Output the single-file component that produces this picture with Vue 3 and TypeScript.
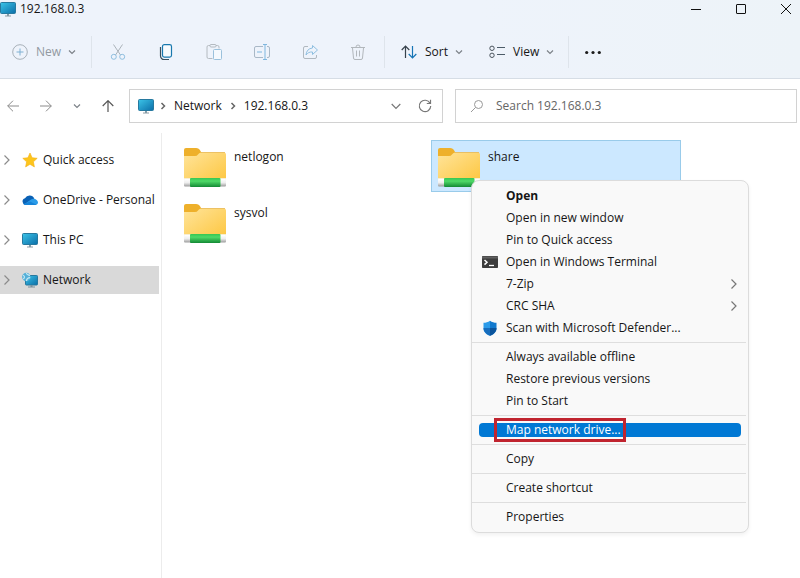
<script setup lang="ts">
import { ref } from 'vue'

interface Place { name: string; icon: 'star' | 'cloud' | 'pc' | 'network' }
interface MenuItem { label: string; icon?: 'terminal' | 'shield'; submenu?: boolean }

const host = '192.168.0.3'
const query = ref('')
const places: Place[] = [
  { name: 'Quick access', icon: 'star' },
  { name: 'OneDrive - Personal', icon: 'cloud' },
  { name: 'This PC', icon: 'pc' },
  { name: 'Network', icon: 'network' },
]
const activePlace = ref('Network')
const folders = ['netlogon', 'share', 'sysvol']
const selected = ref('share')
const highlighted = 'Map network drive...'
const menuGroups: MenuItem[][] = [
  [
    { label: 'Open' },
    { label: 'Open in new window' },
    { label: 'Pin to Quick access' },
    { label: 'Open in Windows Terminal', icon: 'terminal' },
    { label: '7-Zip', submenu: true },
    { label: 'CRC SHA', submenu: true },
    { label: 'Scan with Microsoft Defender...', icon: 'shield' },
  ],
  [{ label: 'Always available offline' }, { label: 'Restore previous versions' }, { label: 'Pin to Start' }],
  [{ label: 'Map network drive...' }],
  [{ label: 'Copy' }],
  [{ label: 'Create shortcut' }],
  [{ label: 'Properties' }],
]
</script>

<template>
  <svg class="defs" width="0" height="0" aria-hidden="true">
    <defs>
      <linearGradient id="screen" x1="0" y1="0" x2="1" y2="1">
        <stop offset="0" stop-color="#3cc4e8" /><stop offset="1" stop-color="#0b6ea8" />
      </linearGradient>
      <linearGradient id="paper" x1="0" y1="0" x2="1" y2="1">
        <stop offset="0" stop-color="#ffe49a" /><stop offset="1" stop-color="#fdc63f" />
      </linearGradient>
      <linearGradient id="pipe" x1="0" y1="0" x2="0" y2="1">
        <stop offset="0" stop-color="#37c653" /><stop offset=".35" stop-color="#4fd968" /><stop offset="1" stop-color="#138a35" />
      </linearGradient>
      <linearGradient id="cap" x1="0" y1="0" x2="0" y2="1">
        <stop offset="0" stop-color="#ffffff" /><stop offset=".5" stop-color="#eeeeee" /><stop offset="1" stop-color="#9b9b9b" />
      </linearGradient>
      <symbol id="monitor" viewBox="0 0 16 16">
        <rect x=".5" y="1.5" width="15" height="11" rx="1" fill="url(#screen)" stroke="#27799f" />
        <path d="M7 13h2v2H7z" fill="#7f9ba8" /><path d="M5 15h6" stroke="#8c9aa3" />
      </symbol>
      <symbol id="down" viewBox="0 0 8 8"><path d="M1 2.500l3 3 3-3" fill="none" stroke="currentColor" stroke-width="1.200" /></symbol>
      <symbol id="right" viewBox="0 0 8 12"><path d="M1.500 1.500L6 6l-4.500 4.500" fill="none" stroke="currentColor" stroke-width="1.200" /></symbol>
      <symbol id="crumb" viewBox="0 0 8 12"><path d="M2.500 3L5.500 6l-3 3" fill="none" stroke="currentColor" stroke-width="1.500" /></symbol>
    </defs>
  </svg>

  <div class="window">
    <header class="top">
      <div class="titlebar">
        <svg class="i16"><use href="#monitor" /></svg>
        <h1>{{ host }}</h1>
        <div class="controls">
          <button aria-label="Minimize"><svg viewBox="0 0 10 10"><path d="M0 5.500h10" /></svg></button>
          <button aria-label="Maximize"><svg viewBox="0 0 10 10"><rect x=".5" y=".5" width="9" height="9" rx=".5" /></svg></button>
          <button aria-label="Close"><svg viewBox="0 0 10 10"><path d="M0 0l10 10M10 0L0 10" /></svg></button>
        </div>
      </div>

      <div class="toolbar">
        <button class="new faded">
          <svg class="i16" viewBox="0 0 16 16"><circle cx="8" cy="8" r="7.300" stroke="#a8b1b9" /><path d="M8 4.500v7M4.500 8h7" stroke="#7fb0d2" /></svg>
          <span>New</span><svg class="chev"><use href="#down" /></svg>
        </button>
        <i class="rule"></i>
        <button class="tool" aria-label="Cut">
          <svg class="i16" viewBox="0 0 16 16"><path d="M3.500.5l7 10.500M12.500.5l-7 10.500" stroke="#abb3ba" /><circle cx="3.800" cy="12.800" r="2.500" stroke="#8fbfe0" /><circle cx="12.200" cy="12.800" r="2.500" stroke="#8fbfe0" /></svg>
        </button>
        <button class="tool" aria-label="Copy">
          <svg class="i16" viewBox="0 0 16 16"><path d="M2.500 3v9a3.500 3.500 0 0 0 3.500 3.500h5" stroke="#3d4f5c" stroke-width="1.200" /><rect x="4.500" y=".6" width="9" height="12.500" rx="1.800" stroke="#1878ae" stroke-width="1.200" fill="#f8fbfe" /></svg>
        </button>
        <button class="tool" aria-label="Paste">
          <svg class="i16" viewBox="0 0 16 16"><path d="M6.500 14.500h-4a1.500 1.500 0 0 1-1.500-1.500V3a1.500 1.500 0 0 1 1.500-1.500H4M10 1.500h1.500A1.500 1.500 0 0 1 13 3v1.500" stroke="#b4bac0" /><rect x="4" y=".5" width="6" height="2.500" rx="1" stroke="#b4bac0" /><rect x="7.500" y="5.500" width="8" height="10" rx="1" stroke="#9bc1dc" fill="#f5f9fd" /></svg>
        </button>
        <button class="tool" aria-label="Rename">
          <svg class="i16" viewBox="0 0 16 16"><path d="M9 2.500H2A1.500 1.500 0 0 0 .5 4v8A1.500 1.500 0 0 0 2 13.500h7M13 2.500h1A1.500 1.500 0 0 1 15.500 4v8a1.500 1.500 0 0 1-1.500 1.500h-1" stroke="#a9b8c6" /><path d="M11 .5v15M9 .5h4M9 15.500h4M3 8h5" stroke="#7fb7df" /></svg>
        </button>
        <button class="tool" aria-label="Share">
          <svg class="i16" viewBox="0 0 16 16"><path d="M6 2.500H3A1.500 1.500 0 0 0 1.500 4v9A1.500 1.500 0 0 0 3 14.500h10a1.500 1.500 0 0 0 1.500-1.500v-2" stroke="#b0b8bf" /><path d="M10.500 1.500l5 4.500-5 4.500V8C7.500 7.700 5.700 8.800 4 11c.3-4 2.500-6.600 6.500-7z" stroke="#8fbfe0" stroke-linejoin="round" /></svg>
        </button>
        <button class="tool" aria-label="Delete">
          <svg class="i16" viewBox="0 0 16 16"><path d="M1 3.500h14M6 3a2 2 0 0 1 4 0M2.500 4l1 10A1.500 1.500 0 0 0 5 15.500h6a1.500 1.500 0 0 0 1.500-1.500l1-10M6.500 6.500v6M9.500 6.500v6" stroke="#b2b7bc" /></svg>
        </button>
        <i class="rule"></i>
        <button class="drop">
          <svg class="i16" viewBox="0 0 16 16"><path d="M4.500 14V2M.7 6l3.800-4 3.800 4" stroke="#37424c" stroke-width="1.200" /><path d="M11.500 2v12M7.700 10l3.800 4 3.800-4" stroke="#1674b5" stroke-width="1.200" /></svg>
          <span>Sort</span><svg class="chev"><use href="#down" /></svg>
        </button>
        <button class="drop">
          <svg class="i16" viewBox="0 0 16 16"><circle cx="3" cy="4.300" r="2.200" stroke="#4b545d" /><circle cx="3" cy="11.300" r="2.200" stroke="#4b545d" /><path d="M8 3.500h8M8 10.500h8" stroke="#4c5b68" stroke-width="1.200" /></svg>
          <span>View</span><svg class="chev"><use href="#down" /></svg>
        </button>
        <i class="rule"></i>
        <button class="tool overflow" aria-label="See more">
          <svg class="i16" viewBox="0 0 16 16"><g fill="#1b1b1b" stroke="none"><circle cx="1.700" cy="8.500" r="1.600" /><circle cx="8" cy="8.500" r="1.600" /><circle cx="14.300" cy="8.500" r="1.600" /></g></svg>
        </button>
      </div>
    </header>

    <div class="navrow">
      <div class="history">
        <button aria-label="Back"><svg viewBox="0 0 12 12"><path d="M12 6H.7M6 .7L.7 6 6 11.300" stroke="#8b8b8b" /></svg></button>
        <button aria-label="Forward"><svg viewBox="0 0 12 12"><path d="M0 6h11.300M6 .7L11.300 6 6 11.300" stroke="#8b8b8b" /></svg></button>
        <button aria-label="Recent locations"><svg class="chev"><use href="#down" /></svg></button>
        <button aria-label="Up"><svg viewBox="0 0 12 12"><path d="M6 12V.7M.7 6L6 .7 11.300 6" stroke="#555" stroke-width="1.200" /></svg></button>
      </div>
      <div class="address">
        <svg class="i16"><use href="#monitor" /></svg>
        <svg class="sep"><use href="#crumb" /></svg>
        <a href="#network">Network</a>
        <svg class="sep"><use href="#crumb" /></svg>
        <a href="#host">{{ host }}</a>
        <button class="expand" aria-label="Previous locations"><svg viewBox="0 0 10 10"><path d="M.7 3L5 7.300 9.300 3" stroke="#777" stroke-width="1.200" /></svg></button>
        <button aria-label="Refresh"><svg class="refresh" viewBox="0 0 14 14"><path d="M12 4.200A5.700 5.700 0 1 0 12.700 7M12.500.8v3.700H8.800" stroke="#777" stroke-width="1.200" /></svg></button>
      </div>
      <label class="search">
        <svg viewBox="0 0 14 14"><circle cx="8.500" cy="5.500" r="4" stroke="#999" /><path d="M5.500 8.500L1 13" stroke="#999" /></svg>
        <input v-model="query" type="search" aria-label="Search" :placeholder="`Search ${host}`" />
      </label>
    </div>

    <div class="body">
      <nav class="places">
        <a v-for="p in places" :key="p.name" href="#" :class="{ active: p.name === activePlace }" @click.prevent="activePlace = p.name">
          <svg class="sep"><use href="#right" /></svg>
          <svg v-if="p.icon === 'star'" class="i16" viewBox="0 0 16 16"><path d="M8 1l2.100 4.700 5.100.6-3.800 3.500 1 5.100L8 12.300l-4.400 2.600 1-5.100L.8 6.300l5.100-.6z" fill="#fdc51b" stroke="#f3ae16" stroke-width=".6" /></svg>
          <svg v-else-if="p.icon === 'cloud'" class="i16" viewBox="0 0 16 16"><path d="M3.500 13A3.500 3.500 0 0 1 3 6.200 5.200 5.200 0 0 1 12.300 6.500L8 10z" fill="#0a61b5" /><path d="M2 12.500L9 7.500c3-2.200 7 .5 7 3 0 1.600-1.300 2.500-2.600 2.500H3.500z" fill="#2a9be8" /><path d="M1.500 12L8 9.500l6.500 3.300-1 .2H3.500A3 3 0 0 1 1.500 12z" fill="#1683d8" /></svg>
          <svg v-else-if="p.icon === 'pc'" class="i16"><use href="#monitor" /></svg>
          <svg v-else class="i16" viewBox="0 0 16 16"><rect x="3.500" y="3.500" width="12" height="9.500" rx=".8" fill="url(#screen)" stroke="#27799f" /><path d="M8.500 13h2v2h-2z" fill="#78909c" /><path d="M6 15h7" stroke="#78909c" /><circle cx="4.300" cy="5" r="4.200" fill="#55b0d8" /><path d="M1 3.200C3 4.200 2.800 5.600 1.300 7M4.300 1c.2 1.600 1.800 1.800 3.600 2.600M4.500 9c0-2 1-3.200 3.700-3.400" fill="none" stroke="#c4e8f4" stroke-width="1.200" /></svg>
          <span>{{ p.name }}</span>
        </a>
      </nav>

      <main class="files">
        <button v-for="f in folders" :key="f" class="tile" :class="{ selected: f === selected }" @click="selected = f">
          <svg class="folder" viewBox="0 0 42 40">
            <path d="M0 2Q0 0 2 0h10q3 0 4.500 3l1 2-3 3H0z" fill="#eeb02b" />
            <path d="M0 8h11q2 0 3-1.500t3-2h23q2 0 2 2V34H0z" fill="url(#paper)" /><path d="M17 4.500h24" stroke="#e9b64d" stroke-width=".8" />
            <path d="M0 30h42v4H0z" fill="#f8eed0" /><rect y="31" width="42" height="7.500" rx="1" fill="url(#cap)" />
            <rect x="6" y="30" width="30.500" height="9" rx="1" fill="url(#pipe)" />
          </svg>
          <span>{{ f }}</span>
        </button>
      </main>
    </div>

    <div class="menu" role="menu">
      <div v-for="(group, g) in menuGroups" :key="g" class="group">
        <button v-for="item in group" :key="item.label" role="menuitem" :class="{ bold: item.label === 'Open', hot: item.label === highlighted }">
          <span class="slot">
            <svg v-if="item.icon === 'terminal'" class="i16" viewBox="0 0 16 16"><rect y="2" width="16" height="12" rx=".8" fill="#3d3d3d" /><path d="M0 2.500h16v2H0z" fill="#606060" /><path d="M2.500 6l2.500 2.300-2.500 2.300" fill="none" stroke="#fff" stroke-width="1.500" /><path d="M7 11.500h5" stroke="#fff" stroke-width="1.300" /></svg>
            <svg v-else-if="item.icon === 'shield'" class="i16" viewBox="0 0 16 16"><path d="M8 .7c2 1.600 4.200 2 6.500 2v5.500c0 4-3 6.200-6.500 7.600z" fill="#1179ce" /><path d="M8 .7c-2 1.600-4.200 2-6.500 2v5.500c0 4 3 6.200 6.500 7.600z" fill="#2c9be9" /><path d="M1.500 8H8v7.800C4.500 14.400 1.500 12 1.500 8z" fill="#176dbd" /><path d="M8 8h6.500c0 4-3 6.400-6.500 7.800z" fill="#0b549c" /></svg>
          </span>
          <span class="label">{{ item.label }}</span>
          <svg v-if="item.submenu" class="more"><use href="#right" /></svg>
        </button>
      </div>
    </div>
  </div>
</template>

<style>
body { margin: 0; background: #fff; }
</style>

<style scoped>
.defs { position: absolute; }
.window { position: relative; min-height: 100vh; display: flex; flex-direction: column; overflow: hidden; font: 12px/16px "Open Sans", "Noto Sans", sans-serif; color: #161616; }
button { border: 0; padding: 0; margin: 0; background: none; font: inherit; color: inherit; display: flex; align-items: center; }
a { color: inherit; text-decoration: none; }
svg { fill: none; flex: none; display: block; }
.i16 { width: 16px; height: 16px; }
.chev { width: 8px; height: 8px; color: #7c8288; }
.sep { width: 8px; height: 12px; color: #666; }

.top { background: linear-gradient(90deg, #eef3fb 60%, #edf3f8); border-bottom: 1px solid #d6dde5; }
.titlebar { display: flex; align-items: center; height: 18px; padding-right: 9px; }
h1 { margin: 0 auto 0 4px; font: inherit; }
.controls { display: flex; gap: 35px; }
.controls svg { width: 10px; height: 10px; stroke: #111; overflow: visible; }
.toolbar { display: flex; align-items: center; padding: 14px 0 6px; }
.toolbar button { height: 40px; justify-content: center; }
.toolbar button.new, .toolbar button.drop { justify-content: flex-start; gap: 8px; }
.toolbar button.new { width: 89px; padding-left: 12px; }
.toolbar button.drop { padding: 0 12px 0 14px; }
.toolbar .chev { margin-left: -1px; }
.faded { color: #9299a1; }
.toolbar .tool { width: 48px; }
.toolbar .overflow { width: 44px; }
.rule { width: 1px; height: 32px; background: #dee4eb; margin: 0 2px; }
.toolbar svg { overflow: visible; }

.navrow { display: grid; grid-template-columns: 110px 314fr 342fr; align-items: center; gap: 12px; padding: 10px 3px 10px 7px; }
.history { display: flex; align-items: center; gap: 21px; }
.history svg { width: 12px; height: 12px; }
.history .chev { width: 8px; height: 8px; }
.address, .search { box-sizing: border-box; height: 34px; min-width: 0; border: 1px solid #d2d2d2; display: flex; align-items: center; }
.address { padding: 0 10px 0 8px; gap: 5px; }
.address a { margin: 0 2px; }
.expand { margin: 0 12px 0 auto; }
.expand svg { width: 10px; height: 10px; }
.refresh { width: 14px; height: 14px; }
.search { padding-left: 14px; gap: 12px; }
.search svg { width: 14px; height: 14px; }
.search input { flex: 1; min-width: 0; border: 0; padding: 0; outline: 0; background: none; font: inherit; color: #333; }
.search input::placeholder { color: #666; opacity: 1; }

.body { flex: 1; display: flex; }
.places { width: 161px; flex: none; border-right: 1px solid #ececec; padding-top: 13px; display: flex; flex-direction: column; gap: 12px; }
.places a { display: flex; align-items: center; height: 28px; margin-right: 2px; padding-left: 3px; white-space: nowrap; }
.places .i16 { margin: 0 5px 0 11px; }
.places .active { background: #d9d9d9; }
.places .sep { color: #8b8b8b; }
.files { flex: 1; display: grid; grid-template-columns: repeat(auto-fill, 250px); grid-auto-rows: 52px; gap: 4px; align-content: start; padding: 7px 15px; }
.files .tile { box-sizing: border-box; border: 1px solid transparent; padding: 7px 6px 0; gap: 8px; align-items: flex-start; }
.tile.selected { background: #cce8ff; border-color: #99cbea; }
.tile span { padding-top: 1px; }
.folder { width: 42px; height: 40px; }

.menu { position: absolute; left: 471px; top: 180px; width: 278px; box-sizing: border-box; padding: 4px 2px 4px 0; border: 1px solid #dcdcdc; border-radius: 8px; background: #f9f9f9; box-shadow: 0 2px 4px rgba(0, 0, 0, .06); }
.group + .group { margin-top: 3px; border-top: 1px solid #dedede; padding-top: 3px; }
.group button { position: relative; z-index: 0; width: 100%; height: 22px; }
.slot { width: 24px; padding-left: 10px; }
.label { white-space: nowrap; }
.more { width: 8px; height: 12px; margin: 0 8px 0 auto; color: #777; }
.bold { font-weight: 700; }
.hot { color: #fff; }
.hot::before { content: ""; position: absolute; z-index: -1; inset: 4px 5px 4px 7px; border-radius: 4px; background: #0078d4; }
.hot .label { position: relative; }
.hot .label::after { content: ""; position: absolute; inset: -4px -5px -4px -12px; border: 3px solid #c0242f; }
</style>
